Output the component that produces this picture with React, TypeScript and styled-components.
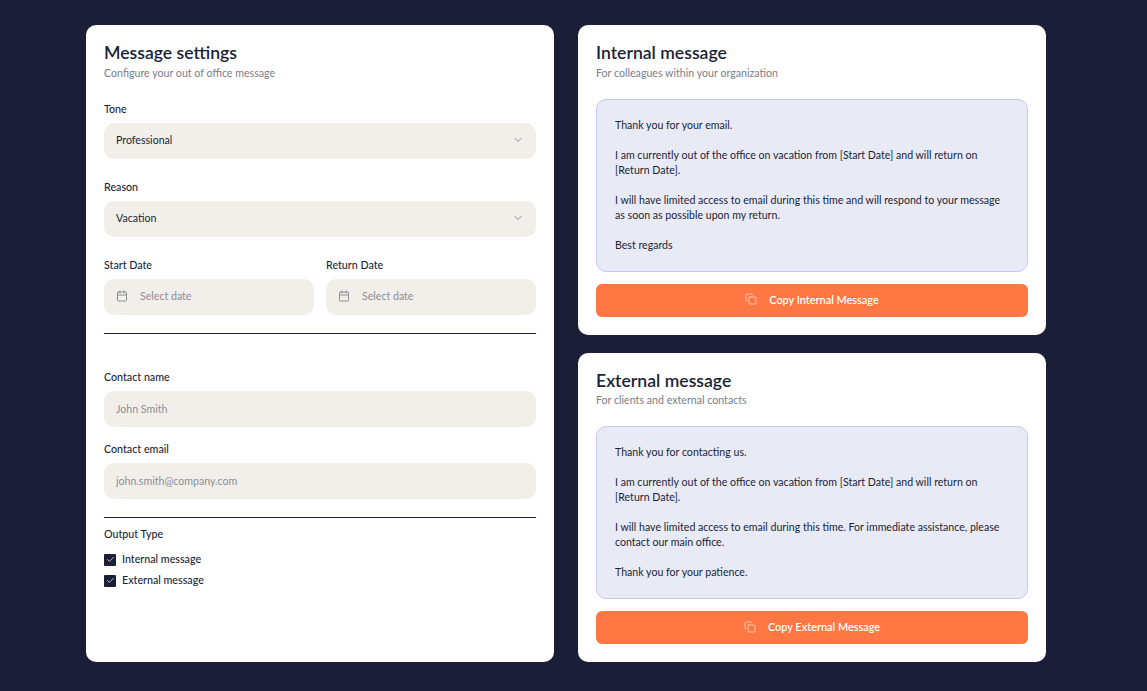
import React from "react";
import styled, { createGlobalStyle } from "styled-components";
import { Calendar, Check, ChevronDown, Copy } from "lucide-react";

const INTERNAL = [
  "Thank you for your email.",
  "I am currently out of the office on vacation from [Start Date] and will return on [Return Date].",
  "I will have limited access to email during this time and will respond to your message as soon as possible upon my return.",
  "Best regards",
];

const EXTERNAL = [
  "Thank you for contacting us.",
  "I am currently out of the office on vacation from [Start Date] and will return on [Return Date].",
  "I will have limited access to email during this time. For immediate assistance, please contact our main office.",
  "Thank you for your patience.",
];

function MessageCard({ title, subtitle, paragraphs, action }: { title: string; subtitle: string; paragraphs: string[]; action: string }) {
  return (
    <Card>
      <Title>{title}</Title>
      <Subtitle>{subtitle}</Subtitle>
      <MessageBox>
        {paragraphs.map((p) => (
          <p key={p}>{p}</p>
        ))}
      </MessageBox>
      <CopyButton>
        <Copy size={12} color="#ffc4a8" />
        {action}
      </CopyButton>
    </Card>
  );
}

function DateField({ label }: { label: string }) {
  return (
    <Field>
      <Label>{label}</Label>
      <Control>
        <Calendar size={12} color="#8d8d96" />
        <Placeholder>Select date</Placeholder>
      </Control>
    </Field>
  );
}

function SelectField({ label, value }: { label: string; value: string }) {
  return (
    <Field>
      <Label>{label}</Label>
      <SelectControl>
        {value}
        <ChevronDown size={12} color="#8d8d96" />
      </SelectControl>
    </Field>
  );
}

function OutputOption({ label }: { label: string }) {
  return (
    <CheckRow>
      <CheckBox>
        <Check size={9} strokeWidth={2} color="#f2efea" />
      </CheckBox>
      <CheckText>{label}</CheckText>
    </CheckRow>
  );
}

export default function App() {
  return (
    <>
      <GlobalStyle />
      <Page>
        <Settings>
          <Title>Message settings</Title>
          <Subtitle>Configure your out of office message</Subtitle>
          <Fields>
            <SelectField label="Tone" value="Professional" />
            <SelectField label="Reason" value="Vacation" />
            <DateRow>
              <DateField label="Start Date" />
              <DateField label="Return Date" />
            </DateRow>
          </Fields>
          <Divider />
          <ContactFields>
            <Field>
              <Label>Contact name</Label>
              <TextControl>
                <Placeholder>John Smith</Placeholder>
              </TextControl>
            </Field>
            <Field>
              <Label>Contact email</Label>
              <TextControl>
                <Placeholder>john.smith@company.com</Placeholder>
              </TextControl>
            </Field>
          </ContactFields>
          <OutputDivider />
          <Label>Output Type</Label>
          <Checks>
            <OutputOption label="Internal message" />
            <OutputOption label="External message" />
          </Checks>
        </Settings>
        <Messages>
          <MessageCard
            title="Internal message"
            subtitle="For colleagues within your organization"
            paragraphs={INTERNAL}
            action="Copy Internal Message"
          />
          <MessageCard
            title="External message"
            subtitle="For clients and external contacts"
            paragraphs={EXTERNAL}
            action="Copy External Message"
          />
        </Messages>
      </Page>
    </>
  );
}

const GlobalStyle = createGlobalStyle`
  html, body {
    margin: 0;
    height: 100%;
    background: #1a1f37;
  }

  body {
    font-family: "Lato", sans-serif;
    color: #1a1f37;
    overflow: hidden;
  }
`;

const Page = styled.div`
  display: grid;
  grid-template-columns: 468px 468px;
  gap: 24px;
  width: 960px;
  height: 637px;
  padding: 25px 0 0 86px;
`;

const Card = styled.section`
  background: #fff;
  border-radius: 10px;
  padding: 18px;
  display: flex;
  flex-direction: column;
  min-height: 0;
  flex: 1;
`;

const Settings = styled(Card)`
  flex: none;
`;

const Messages = styled.div`
  display: flex;
  flex-direction: column;
  gap: 18px;
`;

const Title = styled.h2`
  margin: 0;
  font-size: 17.6px;
  line-height: 20px;
  font-weight: 600;
`;

const Subtitle = styled.p`
  margin: 1.5px 0 18px;
  font-size: 10.65px;
  line-height: 16px;
  font-weight: 400;
  color: #7a7d8a;
`;

const Fields = styled.div`
  display: flex;
  flex-direction: column;
  gap: 21px;
  margin-top: 3.5px;
`;

const ContactFields = styled(Fields)`
  gap: 15px;
  margin-top: 0;
`;

const Field = styled.div`
  display: flex;
  flex-direction: column;
  gap: 7px;
  min-width: 0;
`;

const Label = styled.label`
  font-size: 10.7px;
  line-height: 14px;
  font-weight: 500;
`;

const Control = styled.div`
  box-sizing: border-box;
  height: 36px;
  display: flex;
  align-items: center;
  gap: 12px;
  padding: 0 12px 2px;
  background: #f2efea;
  border-radius: 10px;
  font-size: 10.6px;
`;

const SelectControl = styled(Control)`
  justify-content: space-between;
`;

const TextControl = styled(Control)`
  padding-bottom: 0;
`;

const Placeholder = styled.span`
  color: #8d8d96;
  font-weight: 400;
`;

const DateRow = styled.div`
  display: grid;
  grid-template-columns: 1fr 1fr;
  gap: 12px;
`;

const Divider = styled.hr`
  margin: 18px 0 36px;
  border: none;
  height: 1px;
  background: #1a1f37;
`;

const OutputDivider = styled(Divider)`
  margin: 18px 0 9px;
`;

const Checks = styled.div`
  display: flex;
  flex-direction: column;
  gap: 8px;
  margin-top: 12px;
`;

const CheckRow = styled.div`
  height: 13px;
  display: flex;
  align-items: center;
  gap: 6px;
  font-size: 10.7px;
  line-height: 13px;
  font-weight: 500;
`;

const CheckText = styled.span`
  margin-bottom: 2px;
`;

const CheckBox = styled.span`
  width: 12px;
  height: 12px;
  background: #1a1f37;
  border-radius: 1px;
  display: flex;
  align-items: center;
  justify-content: center;
`;

const MessageBox = styled.div`
  flex: 1;
  background: #e8eaf6;
  border: 1px solid #c5cae9;
  border-radius: 10px;
  padding: 18px;
  font-size: 10.6px;
  line-height: 15px;

  p {
    margin: 0 0 15px;
  }

  p:last-child {
    margin: 0;
  }
`;

const CopyButton = styled.button`
  appearance: none;
  border: none;
  margin-top: 12px;
  height: 33px;
  padding: 0 0 2px;
  flex: none;
  display: flex;
  align-items: center;
  justify-content: center;
  gap: 12px;
  background: #ff7843;
  color: #fff;
  border-radius: 6px;
  font-family: inherit;
  font-size: 10.9px;
  font-weight: 600;
`;
